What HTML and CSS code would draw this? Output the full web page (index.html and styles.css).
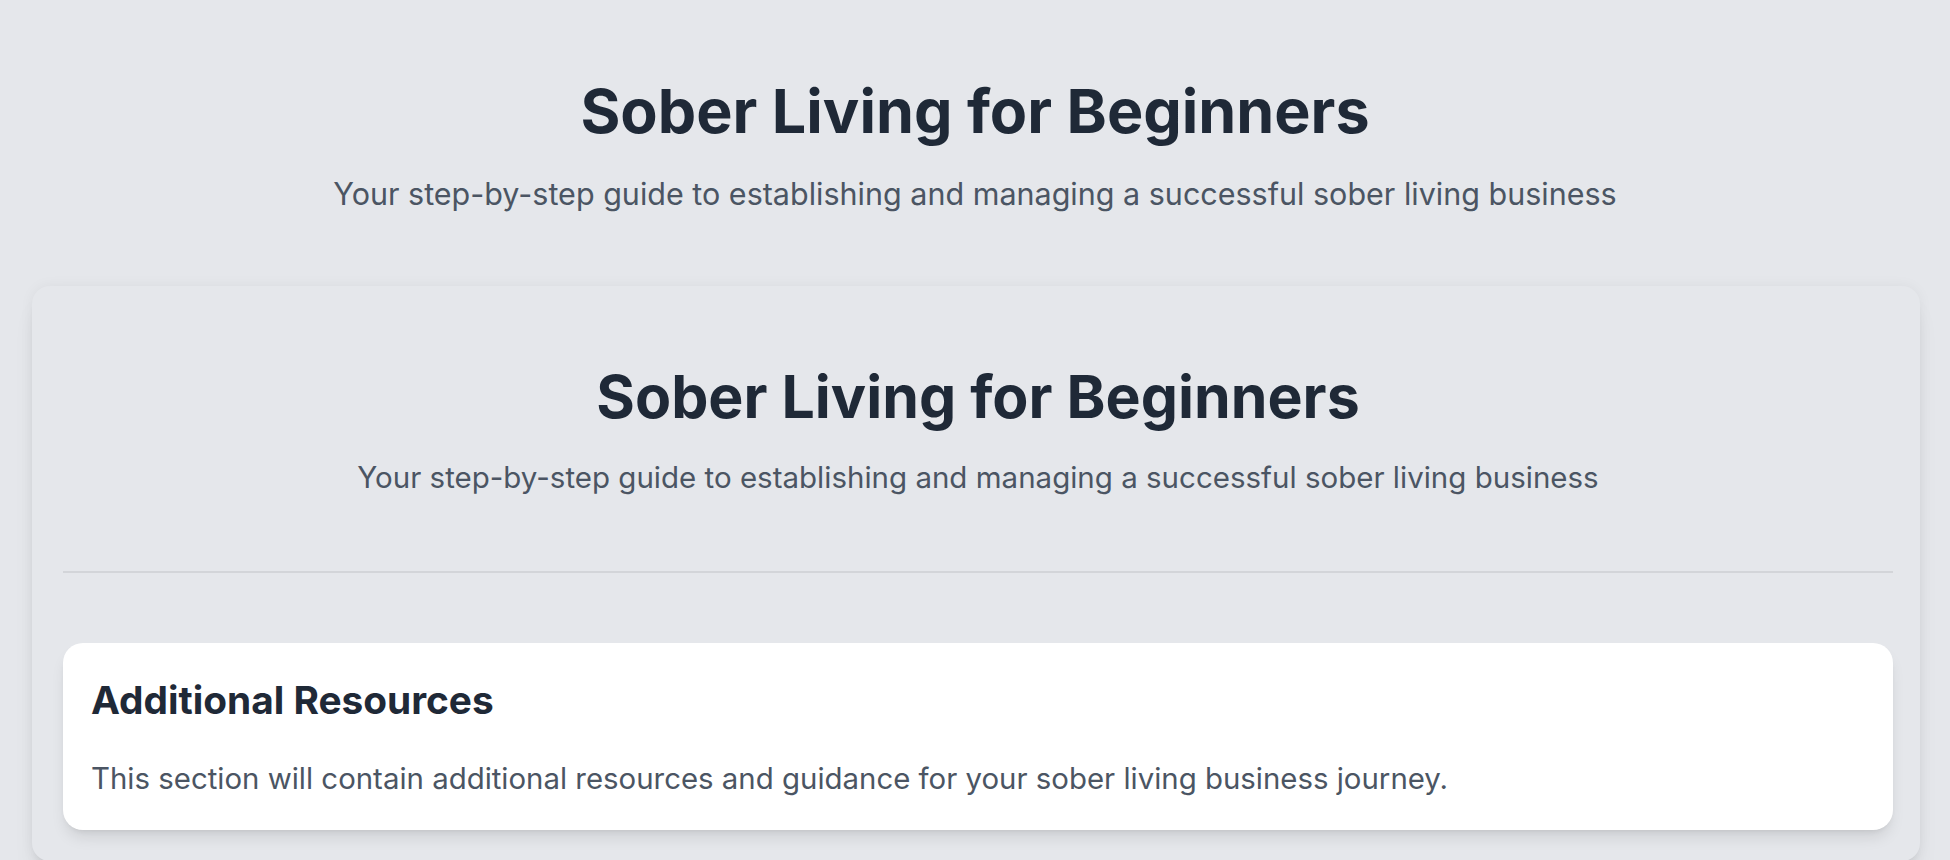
FILE: index.html
```html
<!DOCTYPE html>
<html lang="en">
<head>
<meta charset="utf-8">
<title>Sober Living for Beginners</title>
<link rel="stylesheet" href="styles.css">
</head>
<body>
  <header class="page-header">
    <h1 class="page-title">Sober Living for Beginners</h1>
    <p class="page-subtitle">Your step-by-step guide to establishing and managing a successful sober living business</p>
  </header>
  <main class="panel">
    <section class="panel-header">
      <h2 class="panel-title">Sober Living for Beginners</h2>
      <p class="panel-subtitle">Your step-by-step guide to establishing and managing a successful sober living business</p>
    </section>
    <section class="resource-card">
      <h3 class="resource-title">Additional Resources</h3>
      <p class="resource-text">This section will contain additional resources and guidance for your sober living business journey.</p>
    </section>
  </main>
</body>
</html>
```

FILE: styles.css
```css
* { box-sizing: border-box; }
html, body { margin: 0; padding: 0; }
body {
  background: #e5e7eb;
  font-family: Inter, "Noto Sans", "Liberation Sans", sans-serif;
  color: #1f2937;
}
.page-header {
  padding-top: 75px;
  text-align: center;
}
.page-title {
  margin: 0;
  font-size: 61px;
  line-height: 73px;
  font-weight: 700;
  color: #1f2937;
}
.page-subtitle {
  margin: 26px 0 0;
  font-size: 30.5px;
  line-height: 40px;
  color: #4b5563;
}
.panel {
  margin: 72px 30px 0 32px;
  padding: 0 27px 31px 31px;
  background: #e5e7eb;
  border-radius: 18px;
  box-shadow: 0 0 14px rgba(0,0,0,0.05), 0 20px 25px -5px rgba(0,0,0,0.08), 0 8px 10px -6px rgba(0,0,0,0.08);
}
.panel-header {
  padding-top: 76px;
  padding-bottom: 74px;
  text-align: center;
  border-bottom: 2px solid #d3d5d9;
}
.panel-title {
  margin: 0;
  font-size: 59px;
  line-height: 70px;
  font-weight: 700;
  color: #1f2937;
}
.panel-subtitle {
  margin: 26px 0 0;
  font-size: 29.5px;
  line-height: 39px;
  color: #4b5563;
}
.resource-card {
  margin-top: 70px;
  background: #ffffff;
  border-radius: 20px;
  padding: 33px 28px 31px;
  box-shadow: 0 10px 15px -3px rgba(0,0,0,0.10), 0 4px 6px -4px rgba(0,0,0,0.10);
}
.resource-title {
  margin: 0;
  font-size: 38.8px;
  line-height: 48px;
  font-weight: 700;
  color: #1f2937;
}
.resource-text {
  margin: 35px 0 0;
  font-size: 29.4px;
  line-height: 40px;
  color: #4b5563;
}
```
